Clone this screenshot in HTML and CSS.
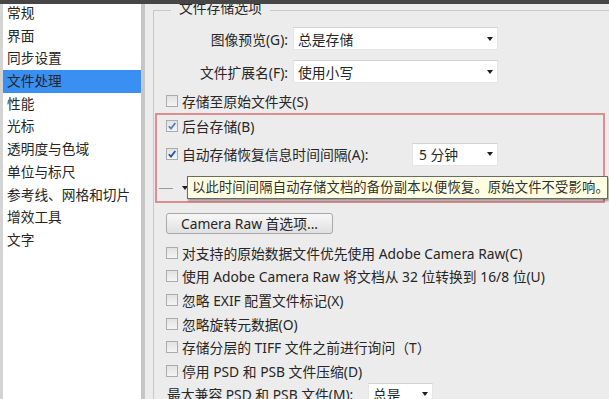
FILE: index.html
```html
<!DOCTYPE html>
<html lang="zh-CN">
<head>
<meta charset="utf-8">
<title>首选项 - 文件处理</title>
<link rel="stylesheet" href="styles.css">
</head>
<body>
<div class="topbar"></div>
<div class="content">
  <nav class="sidebar">
    <ul class="menu">
      <li>常规</li>
      <li>界面</li>
      <li>同步设置</li>
      <li class="active">文件处理</li>
      <li>性能</li>
      <li>光标</li>
      <li>透明度与色域</li>
      <li>单位与标尺</li>
      <li>参考线、网格和切片</li>
      <li>增效工具</li>
      <li>文字</li>
    </ul>
  </nav>
  <main class="panel">
    <fieldset class="group">
      <legend>文件存储选项</legend>
      <div class="field field-first">
        <span class="field-label">图像预览(G):</span>
        <div class="dropdown dropdown-wide"><span>总是存储</span><i class="caret"></i></div>
      </div>
      <div class="field">
        <span class="field-label">文件扩展名(F):</span>
        <div class="dropdown dropdown-wide"><span>使用小写</span><i class="caret"></i></div>
      </div>
      <div class="check-row"><span class="box"></span><span>存储至原始文件夹(S)</span></div>
      <div class="highlight">
        <div class="check-row row-bg">
          <span class="box"><svg class="tick tick-light" viewBox="0 0 10 10" width="10" height="10"><path d="M1.8 5.2 L4 7.6 L8.3 2"/></svg></span>
          <span>后台存储(B)</span>
        </div>
        <div class="check-row row-auto">
          <span class="box"><svg class="tick" viewBox="0 0 10 10" width="10" height="10"><path d="M1.8 5.2 L4 7.6 L8.3 2"/></svg></span>
          <span class="auto-label">自动存储恢复信息时间间隔(A):</span>
          <div class="dropdown dropdown-short"><span>5 分钟</span><i class="caret"></i></div>
        </div>
        <div class="stub-row"><span class="dash"></span><i class="caret"></i></div>
        <div class="tooltip">以此时间间隔自动存储文档的备份副本以便恢复。原始文件不受影响。</div>
      </div>
      <button class="btn" type="button">Camera Raw 首选项...</button>
      <div class="checks">
        <div class="check-row"><span class="box"></span><span>对支持的原始数据文件优先使用 Adobe Camera Raw(C)</span></div>
        <div class="check-row"><span class="box"></span><span>使用 Adobe Camera Raw 将文档从 32 位转换到 16/8 位(U)</span></div>
        <div class="check-row"><span class="box"></span><span>忽略 EXIF 配置文件标记(X)</span></div>
        <div class="check-row"><span class="box"></span><span>忽略旋转元数据(O)</span></div>
        <div class="check-row"><span class="box"></span><span>存储分层的 TIFF 文件之前进行询问（T）</span></div>
        <div class="check-row"><span class="box"></span><span>停用 PSD 和 PSB 文件压缩(D)</span></div>
        <div class="compat-row">
          <span class="compat-label">最大兼容 PSD 和 PSB 文件(M):</span>
          <div class="dropdown dropdown-compat"><span>总是</span><i class="caret"></i></div>
        </div>
      </div>
    </fieldset>
  </main>
</div>
</body>
</html>
```
FILE: styles.css
```css
html, body {
  margin: 0;
  padding: 0;
}
body {
  width: 609px;
  height: 399px;
  overflow: hidden;
  background: #ececec;
  font-family: "Noto Sans", "Noto Sans CJK SC", sans-serif;
  font-size: 13.8px;
  color: #262626;
}
.topbar {
  height: 4px;
  background: #464646;
}
.content {
  display: flex;
  height: 395px;
  overflow: hidden;
}
.sidebar {
  flex: none;
  width: 138px;
  background: #fff;
  border-left: 3px solid #d4d4d4;
  border-right: 4px solid #c6c6c6;
}
.menu {
  list-style: none;
  margin: -2px 0 0;
  padding: 0;
}
.menu li {
  height: 22.7px;
  line-height: 22.7px;
  padding-left: 4px;
  font-size: 13.7px;
  white-space: nowrap;
}
.menu li.active {
  background: #3a8ff2;
}
.panel {
  flex: 1;
  min-width: 0;
  padding-left: 8px;
  overflow: hidden;
}
.group {
  margin: -4px -16px 0 0;
  padding: 0;
  min-width: 0;
  border: 1px solid #c8c8c8;
  border-right: none;
  border-bottom: none;
}
.group legend {
  margin-left: 17px;
  padding: 0 8px 4px;
  line-height: 16px;
  font-size: 13.8px;
}
.field {
  display: flex;
  align-items: center;
  height: 23px;
  margin-top: 10px;
}
.field-first {
  margin-top: 7px;
}
.field-label {
  flex: none;
  width: 134px;
  margin-right: 5px;
  text-align: right;
  white-space: nowrap;
}
.dropdown {
  flex: none;
  display: flex;
  align-items: center;
  justify-content: space-between;
  box-sizing: border-box;
  height: 23px;
  padding: 0 4px;
  background: #fff;
  border: 1px solid #e6e6e6;
  border-top-color: #d2d2d2;
  white-space: nowrap;
}
.dropdown-wide {
  width: 205px;
}
.dropdown-short {
  width: 86px;
  padding-left: 6px;
}
.dropdown-compat {
  width: 65px;
}
.caret {
  display: block;
  width: 0;
  height: 0;
  border-left: 3.5px solid transparent;
  border-right: 3.5px solid transparent;
  border-top: 4px solid #1e1e1e;
}
.check-row {
  display: flex;
  align-items: center;
  height: 20px;
  margin-top: 8px;
  padding-left: 12px;
  white-space: nowrap;
}
.box {
  flex: none;
  display: flex;
  align-items: center;
  justify-content: center;
  box-sizing: border-box;
  width: 12px;
  height: 12px;
  margin-right: 4px;
  border: 1px solid #ababab;
  background: linear-gradient(#e2e2e2, #f4f4f4);
}
.tick path {
  fill: none;
  stroke: #1f4fa8;
  stroke-width: 1.7;
}
.tick-light path {
  stroke: #4f7cc8;
}
.highlight {
  position: relative;
  box-sizing: border-box;
  width: 450px;
  margin: 2px 0 0 1px;
  padding-bottom: 3px;
  border: 2px solid #dd8e8e;
}
.highlight .check-row {
  padding-left: 9px;
}
.highlight .row-bg {
  margin-top: 1px;
}
.highlight .row-auto {
  height: 24px;
  margin-top: 6px;
}
.auto-label {
  flex: none;
  width: 230px;
}
.stub-row {
  display: flex;
  align-items: center;
  height: 20px;
  margin-top: 12px;
}
.dash {
  width: 14px;
  height: 1px;
  margin: 0 9px 0 2px;
  background: #9a9a9a;
}
.tooltip {
  position: absolute;
  left: 30px;
  top: 61px;
  box-sizing: border-box;
  width: 421px;
  height: 23px;
  padding-left: 4px;
  background: #ffffe1;
  border: 1px solid #6a6a6a;
  box-shadow: 1px 2px 2px rgba(0, 0, 0, 0.35);
  font-size: 13.3px;
  letter-spacing: 0.15px;
  line-height: 21px;
  color: #303030;
  white-space: nowrap;
  overflow: hidden;
}
.btn {
  display: block;
  box-sizing: border-box;
  width: 167px;
  height: 21px;
  margin: 10px 0 0 12px;
  padding: 0;
  border: 1px solid #a9a9a9;
  border-radius: 3px;
  background: linear-gradient(#f8f8f8, #e0e0e0);
  font: inherit;
  line-height: 19px;
  color: inherit;
  white-space: nowrap;
}
.checks {
  margin-top: 7px;
}
.checks .check-row {
  height: 23.6px;
  margin-top: 0;
}
.compat-row {
  display: flex;
  align-items: center;
  height: 23.6px;
  padding-left: 13px;
  white-space: nowrap;
}
.compat-label {
  flex: none;
  width: 201px;
}
```
